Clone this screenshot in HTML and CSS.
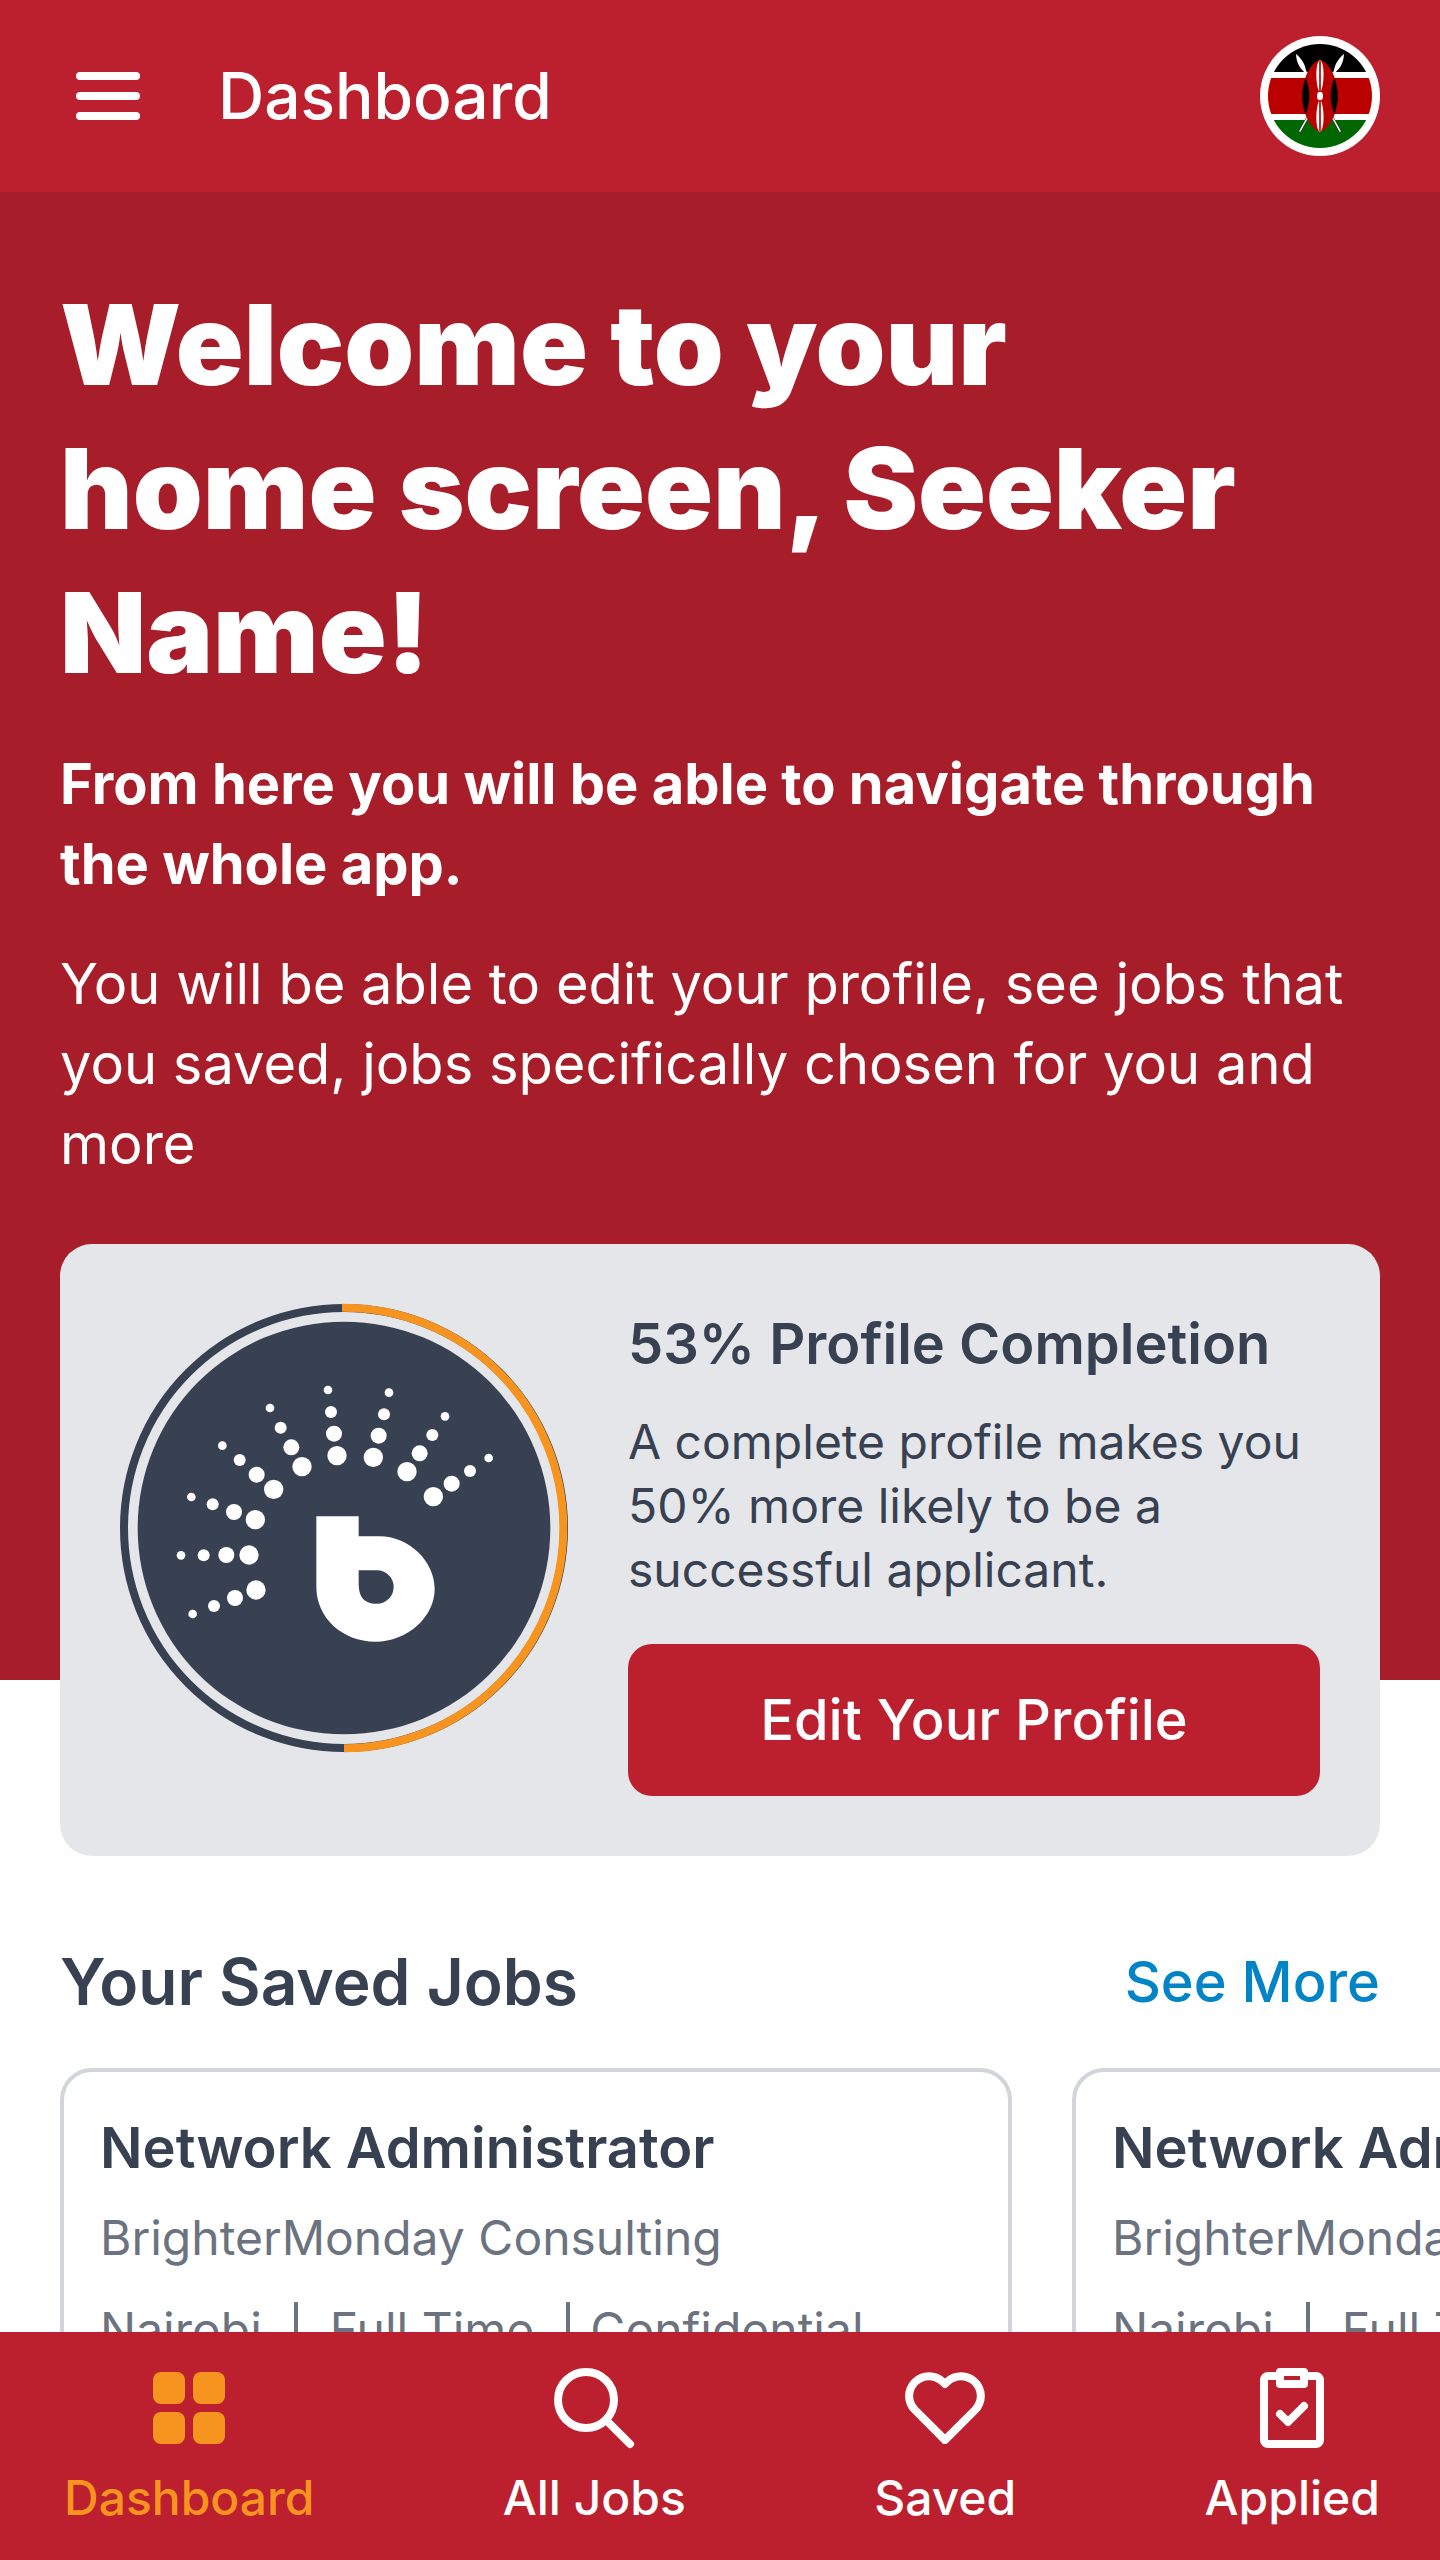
FILE: index.html
```html
<!DOCTYPE html>
<html lang="en">
<head>
<meta charset="utf-8">
<meta name="viewport" content="width=device-width, initial-scale=1">
<title>Dashboard</title>
<link rel="stylesheet" href="styles.css">
</head>
<body>
<header class="topbar">
  <button class="icon-button" type="button" aria-label="Open menu">
    <svg class="menu-icon" viewBox="0 0 64 48" fill="currentColor" aria-hidden="true">
      <rect width="64" height="8" rx="4"/>
      <rect y="20" width="64" height="8" rx="4"/>
      <rect y="40" width="64" height="8" rx="4"/>
    </svg>
  </button>
  <p class="topbar-title">Dashboard</p>
  <button class="icon-button flag-button" type="button" aria-label="Country: Kenya">
    <svg class="flag" viewBox="120 78 360 360" aria-hidden="true">
      <defs><clipPath id="flag-clip"><circle cx="300" cy="258" r="156"/></clipPath></defs>
      <circle cx="300" cy="258" r="180" fill="#fff"/>
      <g clip-path="url(#flag-clip)">
        <rect x="140" y="98" width="320" height="88" fill="#000"/>
        <rect x="140" y="204" width="320" height="108" fill="#b00"/>
        <rect x="140" y="330" width="320" height="90" fill="#060"/>
      </g>
      <path d="M239 365 264 320M361 365 336 320" stroke="#000" stroke-width="7"/>
      <path d="M239 365 264 320M361 365 336 320M254 180 264 196M346 180 336 196" stroke="#fff" stroke-width="5"/>
      <path d="M228 132C245 145 258 166 259 190C241 180 229 158 228 132ZM372 132C355 145 342 166 341 190C359 180 371 158 372 132Z" fill="#fff"/>
      <path d="M300 150C328 157 354 208 354 258S328 357 300 366C272 357 246 308 246 258S272 157 300 150Z" fill="#b00"/>
      <path d="M257 204C243 238 243 278 257 312C272 278 272 238 257 204ZM343 204C357 238 357 278 343 312C328 278 328 238 343 204Z" fill="#000"/>
      <path d="M300 150C284 160 288 228 297 243H303C312 228 316 160 300 150ZM300 366C284 356 288 288 297 273H303C312 288 316 356 300 366Z" fill="#fff"/>
      <path d="M300 152V244M300 272V364" stroke="#b00" stroke-width="5"/>
      <ellipse cx="300" cy="258" rx="9" ry="13" fill="#fff"/>
    </svg>
  </button>
</header>

<main class="page">
  <section class="hero">
    <h1 class="hero-title">Welcome to your home screen, Seeker Name!</h1>
    <p class="hero-lead">From here you will be able to navigate through the whole app.</p>
    <p class="hero-text">You will be able to edit your profile, see jobs that you saved, jobs specifically chosen for you and more</p>
  </section>

  <section class="profile-card">
    <svg class="profile-ring" viewBox="60 72 1344 1344" role="img" aria-label="53% complete">
      <circle cx="732" cy="744" r="660" fill="none" stroke="#374151" stroke-width="24"/>
      <path d="M726 83A661 661 0 0 1 732 1405" fill="none" stroke="#f7941f" stroke-width="24"/>
      <circle cx="732" cy="744" r="619" fill="#374151"/>
      <g fill="#fff">
        <g>
          <circle cx="684" cy="330" r="13"/><circle cx="867" cy="338" r="13"/><circle cx="1035" cy="409" r="13"/><circle cx="1166" cy="534" r="13"/><circle cx="510" cy="384" r="13"/><circle cx="367" cy="497" r="13"/><circle cx="274" cy="651" r="13"/><circle cx="243" cy="826" r="13"/><circle cx="278" cy="1002" r="13"/>
        </g>
        <g>
          <circle cx="693" cy="396" r="18"/><circle cx="852" cy="403" r="18"/><circle cx="997" cy="465" r="18"/><circle cx="1110" cy="573" r="18"/><circle cx="542" cy="443" r="18"/><circle cx="419" cy="540" r="18"/><circle cx="338" cy="673" r="18"/><circle cx="311" cy="826" r="18"/><circle cx="342" cy="978" r="18"/>
        </g>
        <g>
          <circle cx="702" cy="461" r="24"/><circle cx="836" cy="467" r="24"/><circle cx="959" cy="520" r="24"/><circle cx="1055" cy="611" r="24"/><circle cx="574" cy="502" r="24"/><circle cx="470" cy="584" r="24"/><circle cx="402" cy="696" r="24"/><circle cx="379" cy="825" r="24"/><circle cx="405" cy="954" r="24"/>
        </g>
        <g>
          <circle cx="711" cy="527" r="29"/><circle cx="820" cy="532" r="29"/><circle cx="921" cy="575" r="29"/><circle cx="1000" cy="650" r="29"/><circle cx="606" cy="560" r="29"/><circle cx="521" cy="628" r="29"/><circle cx="466" cy="719" r="29"/><circle cx="447" cy="825" r="29"/><circle cx="468" cy="930" r="29"/>
        </g>
        <path fill-rule="evenodd" d="M649 709H776V769H838C926 769 1004 843 1004 927C1004 1010 923 1085 827 1085C725 1085 649 1012 649 921ZM776 871H831A50 50 0 0 1 831 971C789 971 776 948 776 908Z"/>
      </g>
    </svg>
    <div class="profile-body">
      <h2 class="card-title">53% Profile Completion</h2>
      <p class="profile-text">A complete profile makes you 50% more likely to be a successful applicant.</p>
      <button class="primary-button" type="button">Edit Your Profile</button>
    </div>
  </section>

  <section class="saved">
    <div class="saved-head">
      <h2 class="section-title">Your Saved Jobs</h2>
      <a class="see-more" href="#saved">See More</a>
    </div>
    <div class="job-list">
      <article class="job-card">
        <h3 class="card-title">Network Administrator</h3>
        <p class="job-company">BrighterMonday Consulting</p>
        <ul class="job-meta"><li>Nairobi</li><li>Full Time</li><li>Confidential</li></ul>
      </article>
      <article class="job-card">
        <h3 class="card-title">Network Administrator</h3>
        <p class="job-company">BrighterMonday Consulting</p>
        <ul class="job-meta"><li>Nairobi</li><li>Full Time</li><li>Confidential</li></ul>
      </article>
    </div>
  </section>
</main>

<nav class="tabbar" aria-label="Main">
  <a class="tab tab-active" href="#dashboard" aria-current="page">
    <svg class="tab-icon" viewBox="0 0 24 24" fill="currentColor" aria-hidden="true"><rect x="3" y="3" width="8" height="8" rx="2"/><rect x="13" y="3" width="8" height="8" rx="2"/><rect x="3" y="13" width="8" height="8" rx="2"/><rect x="13" y="13" width="8" height="8" rx="2"/></svg>
    Dashboard
  </a>
  <a class="tab" href="#jobs">
    <svg class="tab-icon" viewBox="0 0 24 24" fill="none" stroke="currentColor" stroke-width="2" stroke-linecap="round" aria-hidden="true"><circle cx="10" cy="10" r="7"/><path d="M15 15l6 6"/></svg>
    All Jobs
  </a>
  <a class="tab" href="#saved">
    <svg class="tab-icon" viewBox="0 0 24 24" fill="currentColor" aria-hidden="true"><path d="M12 4.595a5.904 5.904 0 0 0-3.996-1.558 5.942 5.942 0 0 0-4.213 1.758c-2.353 2.363-2.352 6.059.002 8.412l7.332 7.332c.17.299.498.492.875.492a.99.99 0 0 0 .792-.409l7.415-7.415c2.354-2.354 2.354-6.049-.002-8.416a5.938 5.938 0 0 0-4.209-1.754A5.906 5.906 0 0 0 12 4.595zm6.791 1.61c1.563 1.571 1.564 4.025.002 5.588L12 18.586l-6.793-6.793c-1.562-1.563-1.561-4.017-.002-5.584.76-.756 1.754-1.172 2.799-1.172s2.035.416 2.789 1.17l.5.5a.999.999 0 0 0 1.414 0l.5-.5c1.512-1.509 4.074-1.505 5.584-.002z"/></svg>
    Saved
  </a>
  <a class="tab" href="#applied">
    <svg class="tab-icon" viewBox="0 0 24 24" fill="currentColor" aria-hidden="true"><path fill-rule="evenodd" d="M9 2h6a1 1 0 0 1 1 1h2a2 2 0 0 1 2 2v15a2 2 0 0 1-2 2H6a2 2 0 0 1-2-2V5a2 2 0 0 1 2-2h2a1 1 0 0 1 1-1zM6 5v15h12V5h-2v1a1 1 0 0 1-1 1H9a1 1 0 0 1-1-1V5zM10 4v1h4V4z"/><path d="M9 13.5l2 2 4-4" fill="none" stroke="currentColor" stroke-width="2" stroke-linecap="round" stroke-linejoin="round"/></svg>
    Applied
  </a>
</nav>
</body>
</html>
```
FILE: styles.css
```css
* { box-sizing: border-box; }

body {
  margin: 0;
  height: 100vh;
  display: flex;
  flex-direction: column;
  overflow: hidden;
  background: #fff;
  color: #374151;
  font-family: Inter, "Liberation Sans", sans-serif;
  font-size: 48px;
  line-height: 64px;
}

h1, h2, h3, p, ul { margin: 0; padding: 0; }
svg { display: block; flex: none; }
a { text-decoration: none; }

button {
  border: 0;
  color: #fff;
  font: inherit;
}

.topbar {
  flex: none;
  display: flex;
  align-items: center;
  padding: 36px 60px;
  background: #bc202f;
  color: #fff;
}

.icon-button {
  padding: 0;
  background: none;
}

.menu-icon {
  width: 64px;
  height: 48px;
  margin: 0 16px;
}

.topbar-title {
  flex: 1;
  margin-left: 62px;
  font-size: 64px;
  font-weight: 500;
  line-height: 96px;
}

.flag {
  width: 120px;
  height: 120px;
}

.page {
  flex: 1;
  min-height: 0;
  overflow: hidden;
}

.hero {
  display: flex;
  flex-direction: column;
  gap: 40px;
  padding: 80px 60px 496px;
  background: #a71d2a;
  color: #fff;
  font-size: 56px;
  line-height: 80px;
}

.hero-title {
  max-width: 1220px;
  font-size: 112px;
  font-weight: 900;
  line-height: 144px;
}

.hero-lead { font-weight: 700; }

.profile-card {
  display: flex;
  gap: 60px;
  align-items: flex-start;
  margin: -436px 60px 0;
  padding: 60px;
  border-radius: 32px;
  background: #e5e6ea;
}

.profile-ring {
  width: 448px;
  height: 448px;
  overflow: visible;
}

.profile-body {
  flex: 1;
  display: flex;
  flex-direction: column;
}

.card-title {
  font-size: 56px;
  font-weight: 600;
  line-height: 80px;
}

.profile-text { margin: 26px 0 42px; }

.primary-button {
  padding: 36px;
  border-radius: 24px;
  background: #bc202f;
  font-size: 56px;
  font-weight: 500;
  line-height: 80px;
}

.saved { padding: 80px 0 0 60px; }

.saved-head {
  display: flex;
  align-items: center;
  justify-content: space-between;
  padding-right: 60px;
}

.section-title {
  font-size: 64px;
  font-weight: 600;
  line-height: 92px;
}

.see-more {
  color: #0284c7;
  font-size: 56px;
  font-weight: 500;
  line-height: 80px;
}

.job-list {
  display: flex;
  gap: 60px;
  margin-top: 40px;
  overflow: hidden;
}

.job-card {
  flex: none;
  width: 952px;
  padding: 36px;
  border: 4px solid #d1d5db;
  border-radius: 32px;
  color: #6b7280;
}

.job-card .card-title { color: #374151; }
.job-company { margin: 18px 0 32px; }

.job-meta {
  display: flex;
  gap: 32px;
  line-height: 56px;
  list-style: none;
}

.job-meta li + li {
  padding-left: 32px;
  border-left: 4px solid;
}

.job-meta li:last-child { padding-left: 20px; }

.tabbar {
  flex: none;
  display: flex;
  justify-content: space-between;
  padding: 28px 60px 30px 64px;
  background: #bc202f;
}

.tab {
  display: flex;
  flex-direction: column;
  align-items: center;
  gap: 10px;
  color: #fff;
  font-weight: 500;
}

.tab-active { color: #f7941f; }

.tab-icon {
  width: 96px;
  height: 96px;
}
```
